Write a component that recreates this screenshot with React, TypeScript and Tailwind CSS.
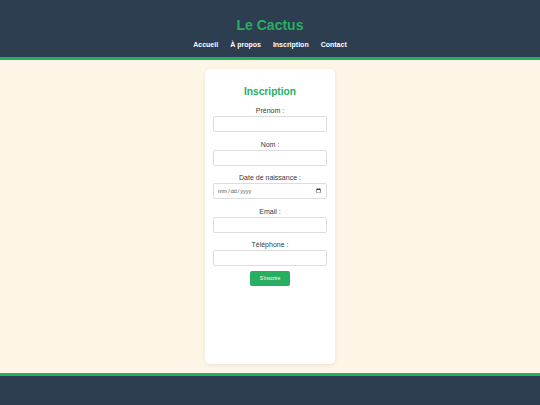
const fields = [
  { label: "Prénom :", type: "text" },
  { label: "Nom :", type: "text" },
  { label: "Date de naissance :", type: "date" },
  { label: "Email :", type: "email" },
  { label: "Téléphone :", type: "tel" },
];

export default function App() {
  return (
    <div className="flex h-screen flex-col bg-[#fdf5e6] font-['Liberation_Sans',Arial,sans-serif]">
      {/* Header */}
      <header className="h-[60px] shrink-0 border-b-[3px] border-[#27ae60] bg-[#2c3e50] text-center">
        <h1 className="pt-[17px] text-[14px] leading-[16px] font-bold text-[#27ae60]">Le Cactus</h1>
        <nav className="mt-[7px] flex justify-center gap-[12px] text-[7px] leading-[9px] font-bold text-white">
          <a href="#">Accueil</a>
          <a href="#">À propos</a>
          <a href="#">Inscription</a>
          <a href="#">Contact</a>
        </nav>
      </header>

      {/* Form */}
      <main className="flex min-h-0 flex-1 justify-center py-[9px]">
        <div className="w-[130px] rounded-[5px] bg-white px-[8px] pt-[17px] text-center shadow-[0_1px_4px_rgba(0,0,0,0.08)]">
          <h2 className="mb-[8px] text-[10.2px] leading-[12px] font-bold text-[#27ae60]">Inscription</h2>
          {fields.map((f, i) => (
            <div key={f.label} className={i === fields.length - 1 ? "mb-[5px]" : "mb-[7.5px]"}>
              <label className="mb-[1px] block text-[7px] leading-[9px] text-[#3a3a3a]">{f.label}</label>
              <input
                type={f.type}
                className="block h-[16px] w-full rounded-[2px] border border-[#ddd] bg-white px-[3px] text-[5.5px] text-[#555]"
              />
            </div>
          ))}
          <button className="mx-auto block h-[15px] w-[40px] rounded-[2px] bg-[#27ae60] text-[5px] text-white">
            S'inscrire
          </button>
        </div>
      </main>

      {/* Footer */}
      <footer className="h-[32px] shrink-0 border-t-[3px] border-[#27ae60] bg-[#2c3e50]" />
    </div>
  );
}
